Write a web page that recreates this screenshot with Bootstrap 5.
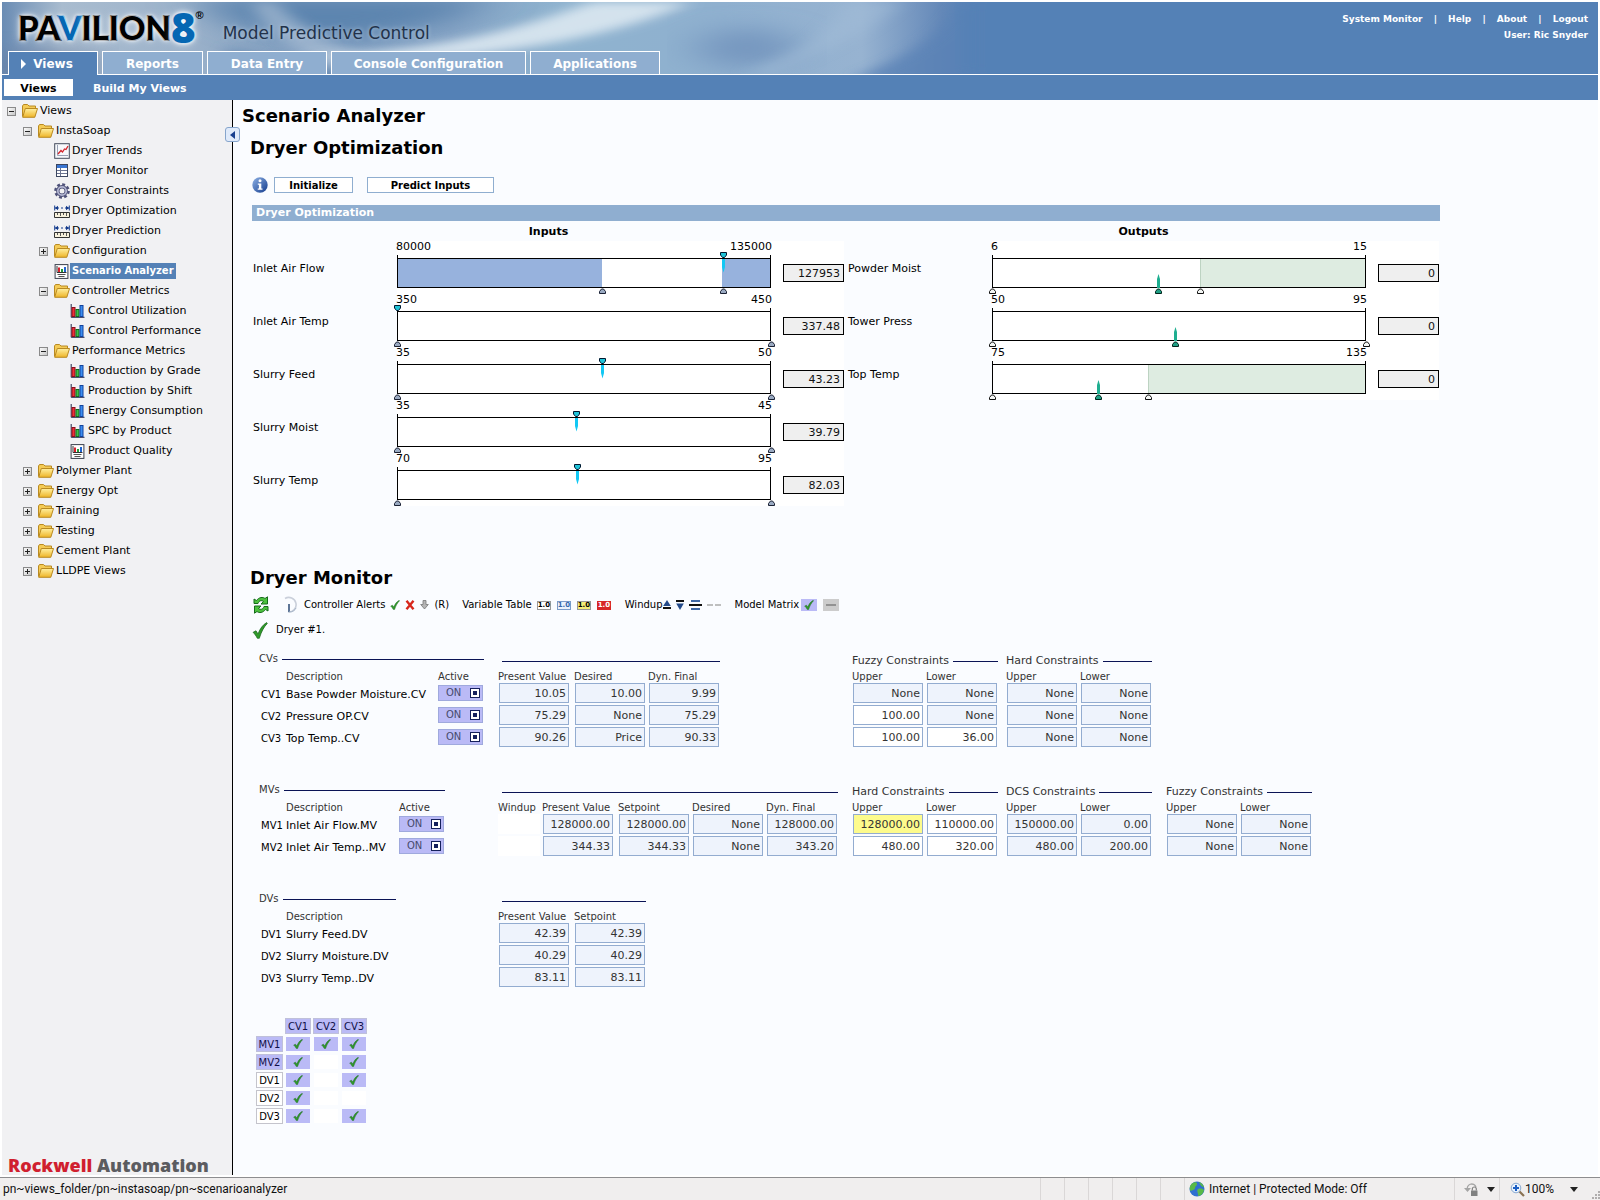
<!DOCTYPE html>
<html lang="en">
<head>
<meta charset="utf-8">
<meta name="viewport" content="width=device-width, initial-scale=1">
<title>Pavilion8 - Scenario Analyzer</title>
<link href="https://cdn.jsdelivr.net/npm/bootstrap@5.3.0/dist/css/bootstrap.min.css" rel="stylesheet">
<style>
  :root { --pv-blue:#5481b6; --pv-light:#8faed0; --pv-lilac:#babaf6; --pv-navy:#0a1355; }
  body { font-family:"DejaVu Sans",Verdana,sans-serif; font-size:11px; line-height:16px; color:#000; background:#fff; min-height:100vh; }
  a { color:inherit; text-decoration:none; }
  svg { flex:none; display:block; }
  h1, h2 { font-size:18px; line-height:24px; font-weight:700; margin:0; }

  /* banner */
  .banner { background:var(--pv-blue); height:73px; margin:2px 2px 0; position:relative; border-bottom:1px solid #fff; }
  .banner-art { position:absolute; left:0; top:0; width:1000px; height:72px; }
  .banner-body { position:relative; height:72px; }
  .brand-row { height:49px; padding-left:16px; }
  .brand-name { font:900 33px/40px Lato,"Open Sans",sans-serif; color:#000; -webkit-text-stroke:2px; paint-order:stroke fill; text-shadow:0 0 3px #fff,0 0 5px #fff,0 0 8px #dfe8f2; }
  .brand-hue { color:#0567b3; }
  .brand-eight { font:800 42px/40px "Open Sans",sans-serif; color:#0567b3; -webkit-text-stroke:1px; }
  .brand-reg { font:700 11px/12px "Liberation Sans",sans-serif; margin-bottom:24px; }
  .brand-sub { font-size:17px; line-height:24px; color:#22324a; margin-left:19px; padding-top:19px; text-shadow:0 0 4px #b5c8dc; }
  .tool-links { font-size:9px; font-weight:700; color:#fff; padding:9px 10px 0 0; }
  .tabs { gap:4px; padding-left:6px; height:24px; }
  .tabs a { border:1px solid #fff; border-bottom:0; background:var(--pv-light); color:#fff; font-weight:700; font-size:12px; line-height:24px; height:23px; text-align:center; }
  .tabs a.on { background:var(--pv-blue); height:24px; padding-right:12px; gap:7px; }
  .tab-a { width:90px; } .tab-b { width:101px; } .tab-c { width:120px; } .tab-d { width:195px; } .tab-e { width:130px; }
  .subbar { background:var(--pv-blue); height:25px; margin:0 2px; padding:4px 0 4px 2px; color:#fff; font-weight:700; gap:20px; }
  .subbar a { line-height:19px; height:17px; }
  .subbar a.on { background:#fff; color:#000; width:69px; text-align:center; }

  /* tree */
  .tree-pane { width:231px; margin-left:2px; background:#f1f1f3; border-right:1px solid #000; position:relative; }
  .tree ul, .tree { list-style:none; margin:0; padding:0; }
  .tree { padding:1px 0 0 5px; }
  .tree ul { padding-left:16px; }
  .node { display:flex; align-items:center; height:20px; }
  .twist { width:15px; flex:none; display:flex; padding:0; border:0; background:none; }
  .node .pic { width:18px; flex:none; }
  .node a { white-space:nowrap; }
  .node a.on { background:var(--pv-blue); color:#fff; font-weight:700; font-size:10px; padding:0 2px; margin-left:-2px; }
  .collapser { position:absolute; right:-8px; top:27px; width:15px; height:15px; padding:0; border:1px solid #86a5cc; border-radius:3px; background:#dfeafa; display:flex; align-items:center; justify-content:center; }
  .vendor { font:800 18px/20px "Open Sans",sans-serif; color:#5b5c60; padding-left:6px; margin-top:auto; white-space:nowrap; }
  .vendor b { color:#d01f2f; font-weight:800; }

  /* content */
  .pane { background:#fafcff; padding:4px 0 0 9px; margin-right:2px; min-width:0; }
  .inset { padding-left:8px; }
  .opt-title { margin-top:8px; }
  .optimizer { max-width:1198px; padding-left:10px; }
  .actions { margin:17px 0 12px; }
  .actions svg { margin-right:6px; }
  .wire-btn { border:1px solid var(--pv-light); background:#fff; font-size:10px; font-weight:700; line-height:13px; height:16px; padding:1px 0 0; }
  .w-init { width:79px; } .w-pred { width:127px; margin-left:14px; }
  .strip { background:var(--pv-light); color:#fff; font-weight:700; padding-left:4px; height:16px; }
  .halves { display:grid; grid-template-columns:1fr 1fr; gap:2px; }
  .half-title { font-weight:700; text-align:center; height:20px; line-height:22px; }
  .gauge-row { display:flex; height:53px; padding-right:1px; }
  .gauge-row > label { width:145px; flex:none; padding:20px 0 0 1px; }
  .gauge-side { flex:1; display:flex; background:#fff; gap:12px; }
  .gauge { flex:1; position:relative; }
  .scale { display:flex; justify-content:space-between; line-height:12px; height:14px; margin:0 -1px; }
  .gauge-box { border:solid #000; border-width:0 1px; height:33px; padding-top:3px; }
  .gauge-track { border:solid #000; border-width:1px 0; height:30px; position:relative; }
  .fill { position:absolute; top:0; bottom:0; background:#97b2dd; }
  .fill.good { background:#deece1; border-left:1px solid #bdd3c2; }
  .pin { position:absolute; margin-left:-5px; }
  .pin-top { top:11px; } .pin-low { top:33px; } .pin-limit { top:46px; }
  .readout { width:61px; height:18px; margin-top:23px; border:1px solid #000; background:#efefef; text-align:right; padding:0 3px; font-size:11px; line-height:16px; border-radius:0; color:#111; }

  /* monitor */
  .monitor { margin-top:60px; }
  .legend-bar { font-size:10px; height:22px; padding-left:2px; }
  .legend-bar + .legend-bar { margin:3px 0 12px; }
  .keys { display:flex; align-items:center; gap:5px; }
  .keys-alert { margin-right:13px; }
  .keys-wind { margin:0 14px; }
  .clock { margin:0 5px 0 11px; }
  .wind-set { display:flex; gap:5px; }
  .mat-set { display:flex; gap:6px; margin-left:2px; }
  .chip { border:1px solid #999; font-size:7px; line-height:7px; font-weight:700; width:14px; height:9px; text-align:center; background:#fff; margin-left:1px; }
  .chip.first-chip { margin-left:0; }
  .chip.c-blue { border-color:#7b9cc9; color:#3767ab; background:#eaf2fc; }
  .chip.c-yel { background:#f3ec76; }
  .chip.c-red { background:#d72626; color:#fff; border-color:#d72626; }
  .block { display:flex; padding-left:17px; margin-bottom:35px; color:#333; }
  .names { width:239px; flex:none; }
  .values { width:354px; flex:none; }
  .pair { width:154px; flex:none; }
  .pair + .pair { width:160px; }
  .grp { width:max-content; }
  .grp-title { display:flex; align-items:center; gap:4px; height:16px; margin-right:2px; white-space:nowrap; }
  .names .grp-title { height:12px; line-height:12px; margin:0 0 4px; font-size:10px; }
  .values .grp-title { margin-left:4px; }
  .grp-title::after { content:""; flex:1; border-top:1px solid var(--pv-navy); }
  .grp table { border-collapse:collapse; table-layout:fixed; }
  .grp th { font-weight:400; font-size:10px; line-height:12px; height:14px; padding:2px 0 0; white-space:nowrap; }
  .grp td { padding:0; height:22px; vertical-align:top; }
  .names td { color:#000; white-space:nowrap; }
  .names td.txt { line-height:20px; padding-top:2px; }
  .c-id { width:27px; } .c-cv { width:152px; } .c-mv { width:113px; } .c-dv { width:110px; } .c-on { width:46px; }
  .c-wide { width:76px; } .c-val { width:74px; } .c-wind { width:44px; }
  .names td.code { font-size:10px; padding-left:2px; }
  .datum { display:block; width:70px; height:20px; margin-left:1px; border:1px solid #93acd0; border-radius:0; background:#eef3fc; font-size:11px; line-height:18px; padding:0 2px; text-align:right; color:#333; }
  .datum.open { background:#fff; } .datum.flag { background:#fdfb8c; }
  .blank { display:block; width:42px; height:20px; background:#fff; }
  .switch { display:flex; align-items:center; justify-content:space-between; width:45px; height:16px; margin-top:2px; padding:0 2px 0 7px; border:1px solid #9fa9dd; background:var(--pv-lilac); color:#474a6c; font-size:10px; line-height:14px; }
  .matrix { border-collapse:separate; border-spacing:2px; margin:-8px 0 0 12px; }
  .matrix th { font-size:10px; font-weight:400; line-height:13px; height:16px; padding:1px 0 0; width:26px; text-align:center; border:1px solid #c4c4cc; background:#fff; color:#000; }
  .matrix thead th, .matrix th.live { background:var(--pv-lilac); border-color:#bfc0da; color:#101048; }
  .matrix thead td { background:none; }
  .matrix tbody th { width:27px; }
  .matrix td { padding:0; height:16px; background:#fff; border:1px solid #fafcff; }
  .matrix td.hit { background:var(--pv-lilac); }
  .matrix td svg { margin:auto; }

  /* status bar */
  .status { border-top:1px solid #8d8d8f; margin-top:2px; background:#f0eeee; height:23px; font:12px/22px Roboto,"Open Sans",sans-serif; color:#111; padding-left:3px; }
  .slot { border-left:1px solid #dad7d7; width:24px; align-self:stretch; }
  .slot-zone { width:270px; } .slot-lock { width:45px; } .slot-zoom { width:101px; padding-left:10px; }
</style>
<script src="https://cdn.jsdelivr.net/npm/bootstrap@5.3.0/dist/js/bootstrap.bundle.min.js"></script>
</head>
<body class="d-flex flex-column">

<svg width="0" height="0" class="position-absolute" aria-hidden="true">
  <defs>
    <linearGradient id="gFold" x1="0" y1="0" x2="0" y2="1"><stop offset="0" stop-color="#fff0a0"/><stop offset="1" stop-color="#eeb427"/></linearGradient>
    <linearGradient id="gInfo" x1="0" y1="0" x2="1" y2="1"><stop offset="0" stop-color="#8fb2e6"/><stop offset="1" stop-color="#123b8c"/></linearGradient>
    <linearGradient id="gTog" x1="0" y1="0" x2="1" y2="1"><stop offset="0" stop-color="#fff"/><stop offset="1" stop-color="#c4c4c4"/></linearGradient>
    <symbol id="folder" viewBox="0 0 16 14"><path d="M.5 12.500V2l1-1.500h4L7 2h6.500v2" fill="#f4cb55" stroke="#b98a22"/><path d="M.7 13.300 3.300 4.500h12.200l-2.700 8.800z" fill="url(#gFold)" stroke="#b98a22"/></symbol>
    <symbol id="minus" viewBox="0 0 9 9"><rect x=".5" y=".5" width="8" height="8" fill="url(#gTog)" stroke="#8a8a8a"/><path d="M2 4.500h5" stroke="#222"/></symbol>
    <symbol id="plus" viewBox="0 0 9 9"><rect x=".5" y=".5" width="8" height="8" fill="url(#gTog)" stroke="#8a8a8a"/><path d="M2 4.500h5M4.500 2v5" stroke="#222"/></symbol>
    <symbol id="trend" viewBox="0 0 16 16"><rect x=".7" y=".7" width="14.600" height="14.600" fill="#f7f9fc" stroke="#444b5c"/><path d="M3.500 2v10.500H14" fill="none" stroke="#9aa2b5"/><path d="m4 11 3-3.500 1.500 1.500L10.500 6 12 6.500 14 3" fill="none" stroke="#d3262d" stroke-width="1.300"/></symbol>
    <symbol id="grid" viewBox="0 0 16 16"><rect x="2.500" y="1.500" width="11" height="12" fill="#fff" stroke="#3c4660"/><path d="M3 2h10v3H3z" fill="#3a76d2"/><path d="M3 7.500h10M3 10.500h10M6.500 5v8" stroke="#6a7390"/></symbol>
    <symbol id="gear" viewBox="0 0 16 16"><circle cx="8" cy="8" r="6.600" fill="none" stroke="#4d5078" stroke-width="2.400" stroke-dasharray="2.900 2.280"/><circle cx="8" cy="8" r="4.200" fill="none" stroke="#4d5078" stroke-width="3.400"/><circle cx="8" cy="8" r="4.200" fill="none" stroke="#b4b7d2" stroke-width="1.800"/><circle cx="8" cy="8" r="2" fill="#f1f1f3"/></symbol>
    <symbol id="ruler" viewBox="0 0 16 13"><path d="M.7.500v5M15.300.500v5" stroke="#123a8c"/><path d="M1 3h4M11 3h4M7 3h2" stroke="#123a8c"/><path d="m1 3 3-2.300v4.600zM15 3l-3-2.300v4.600z" fill="#123a8c"/><path d="M.5 7.500h15v5H.5z" fill="#f7f1dc" stroke="#333"/><path d="M3.500 10v-2M6.500 11V8M9.500 10v-2M12.500 11V8" stroke="#555"/></symbol>
    <symbol id="bars" viewBox="0 0 14 14"><path d="M.7 0v13.300H14" fill="none" stroke="#23294d"/><rect x="1.500" y="3.500" width="3" height="9" fill="#ee2f3a" stroke="#8b0f1c"/><rect x="5.500" y="5.500" width="3" height="7" fill="#3cc14a" stroke="#0f6a1c"/><rect x="9.500" y="1.500" width="3" height="11" fill="#3c8df0" stroke="#11419b"/></symbol>
    <symbol id="report" viewBox="0 0 14 15"><rect x=".6" y=".6" width="12.800" height="13.800" fill="#fff" stroke="#3a3f4c"/><path d="M2.500 2v6.500H12" fill="none" stroke="#333"/><path d="M3.500 3.500h2V8h-2z" fill="#d8202c"/><path d="M6.500 5h2v3h-2z" fill="#1f9a35"/><path d="M9.500 3h2v5h-2z" fill="#1f64d0"/><path d="M3 10.500h8M4 12.500h6" stroke="#555"/></symbol>
    <symbol id="tick" viewBox="0 0 12 12"><path d="M.8 7.300 3 6.200l1.500 2.200C6.200 4.500 8 2 11 .4L11.500 1C8.800 3.500 7 7 5.500 11.500H4C3 9.700 2 8.400.8 7.300z" fill="#2f9a2a" stroke="#155f18" stroke-width=".5"/></symbol>
    <symbol id="pinValue" viewBox="0 0 10 21"><path d="M2.500.500h6v2.500L6.500 5.500h-2L2.500 3z" fill="#20c4d8" stroke="#001830"/><path d="M4 7h3v8L5.500 20.500 4 15z" fill="#12c8f4"/></symbol>
    <symbol id="pinHead" viewBox="0 0 10 7"><path d="M2.500.500h6v2.500L6.500 5.500h-2L2.500 3z" fill="#20c4d8" stroke="#001830"/></symbol>
    <symbol id="pinOut" viewBox="0 0 10 20"><path d="M5.500 0 7 5v9H4V5z" fill="#1fae90"/><path d="M2.500 19.500v-2l2-2.500h2l2 2.500v2z" fill="#1f9f84" stroke="#00241c"/></symbol>
    <symbol id="pinGrey" viewBox="0 0 10 7"><path d="M2.500 6.500v-2l2-2.500h2l2 2.500v2z" fill="#9aaac2" stroke="#1a2134"/></symbol>
    <symbol id="pinWhite" viewBox="0 0 10 7"><path d="M2.500 6.500v-2l2-2.500h2l2 2.500v2z" fill="#f4f6f4" stroke="#111"/></symbol>
  </defs>
</svg>

<header class="banner">
  <svg class="banner-art" viewBox="0 0 1000 72" preserveAspectRatio="none" aria-hidden="true">
    <defs>
      <linearGradient id="bBase" x1="0" x2="1"><stop offset="0" stop-color="#6a8cb4"/><stop offset=".06" stop-color="#a9bccf"/><stop offset=".18" stop-color="#9db3cb"/><stop offset=".3" stop-color="#7f9dbf"/><stop offset=".45" stop-color="#86a4c5"/><stop offset=".56" stop-color="#8fb3cf"/><stop offset=".72" stop-color="#8fb0cf"/><stop offset=".86" stop-color="#97b3d1"/><stop offset=".94" stop-color="#6488b8"/><stop offset=".97" stop-color="#5481b6"/><stop offset="1" stop-color="#5481b6"/></linearGradient>
      <filter id="soft" x="-20%" y="-50%" width="140%" height="200%"><feGaussianBlur stdDeviation="9 5"/></filter>
      <filter id="softer" x="-30%" y="-80%" width="160%" height="260%"><feGaussianBlur stdDeviation="24 10"/></filter>
    </defs>
    <rect width="1000" height="72" fill="url(#bBase)"/>
    <path d="M190-5H490C460 18 400 34 320 36 260 34 220 20 190-5z" fill="#5b84af" filter="url(#softer)"/>
    <path d="M225 45C270 58 330 66 420 80H225z" fill="#5f83ad" filter="url(#soft)" opacity=".7"/>
    <path d="M250 0h24c20 25 70 50 130 72h-60C290 50 262 30 250 0z" fill="#b2c4d8" filter="url(#soft)" opacity=".6"/>
    <path d="M0 50h90v30H0z" fill="#64779b" filter="url(#softer)" opacity=".7"/>
    <path d="M300 54C430 50 510 30 590 0H690C620 32 520 50 400 60z" fill="#dce8f1" filter="url(#soft)" opacity=".9"/>
    <ellipse cx="745" cy="46" rx="50" ry="20" fill="#7697bf" filter="url(#softer)"/>
    <path d="M770 72C820 50 870 30 900 0L840 0C830 30 800 50 740 72z" fill="#a3bdd8" filter="url(#soft)" opacity=".5"/>
    <path d="M850 76C900 58 940 34 960 0h60v90z" fill="#5a82b6" filter="url(#soft)" opacity=".8"/>
    <path d="M960 0h40v72h-40z" fill="#5481b6" filter="url(#soft)"/>
    <path d="M985 0h15v72h-15z" fill="#5481b6"/>
  </svg>
  <div class="banner-body">
    <div class="d-flex brand-row">
      <div class="d-flex align-items-center">
        <span class="brand-name">PA<span class="brand-hue">V</span>ILION</span><span class="brand-name brand-eight">8</span><span class="brand-reg">®</span>
      </div>
      <div class="brand-sub">Model Predictive Control</div>
      <div class="tool-links ms-auto text-end">
        <div><a href="#">System Monitor</a> <span class="px-2">|</span> <a href="#">Help</a> <span class="px-2">|</span> <a href="#">About</a> <span class="px-2">|</span> <a href="#">Logout</a></div>
        <div>User: Ric Snyder</div>
      </div>
    </div>
    <nav class="d-flex tabs" aria-label="Main">
      <a href="#" class="on tab-a d-flex align-items-center justify-content-center"><svg width="5" height="10" viewBox="0 0 5 10"><path d="M0 0l5 5-5 5z" fill="#fff"/></svg>Views</a>
      <a href="#" class="tab-b">Reports</a>
      <a href="#" class="tab-c">Data Entry</a>
      <a href="#" class="tab-d">Console Configuration</a>
      <a href="#" class="tab-e">Applications</a>
    </nav>
  </div>
</header>
<nav class="subbar d-flex" aria-label="Views"><a href="#" class="on">Views</a><a href="#">Build My Views</a></nav>

<div class="d-flex flex-fill">
  <aside class="tree-pane d-flex flex-column flex-shrink-0">
    <button class="collapser" aria-label="Hide tree"><svg width="5" height="8" viewBox="0 0 5 8"><path d="M5 0v8L0 4z" fill="#173f8f"/></svg></button>
    <ul class="tree" id="tree"></ul>
    <div class="vendor"><b>Rockwell</b> Automation</div>
  </aside>

  <main class="pane flex-fill">
    <h1>Scenario Analyzer</h1>
    <section>
      <h2 class="inset opt-title">Dryer Optimization</h2>
      <div class="optimizer">
        <div class="d-flex align-items-center actions">
          <svg width="16" height="16" viewBox="0 0 16 16"><circle cx="8" cy="8" r="7.700" fill="url(#gInfo)"/><circle cx="8" cy="3.800" r="1.500" fill="#fff"/><path d="M5.800 6.500h3.500v5h1.200v1.200H5.700v-1.200h1.200V7.700H5.800z" fill="#fff"/></svg>
          <button class="wire-btn w-init">Initialize</button>
          <button class="wire-btn w-pred">Predict Inputs</button>
        </div>
        <div class="strip">Dryer Optimization</div>
        <div class="halves">
          <div id="inputs"><div class="half-title">Inputs</div></div>
          <div id="outputs"><div class="half-title">Outputs</div></div>
        </div>
      </div>
    </section>

    <section class="monitor">
      <h2 class="inset">Dryer Monitor</h2>
      <div class="inset mt-1">
        <div class="legend-bar d-flex align-items-center">
          <svg width="18" height="18" viewBox="0 0 18 18"><path d="M2 7.500V3l2.500 1.500C7 1 11 .8 13 2.500L15.500.800V8H9l2.500-2.500C9.500 4 7 4.500 6 7.500z" fill="#4cc13e" stroke="#156b1a"/><path d="M16 10.500V15l-2.500-1.500C11 17 7 17.200 5 15.500L2.500 17.200V10H9l-2.500 2.500c2 1.500 4.500 1 5.500-2z" fill="#4cc13e" stroke="#156b1a"/></svg>
          <svg width="18" height="18" viewBox="0 0 18 18" class="clock"><path d="M4 2.500a7.300 7.300 0 1 1 3 13.500" fill="none" stroke="#c9cfda" stroke-width="1.600"/><path d="M8 8v8" stroke="#5d7596" stroke-width="2"/><path d="M8 16c4 0 6-2 7-4" fill="none" stroke="#a5b4c8"/></svg>
          <div class="keys keys-alert">
            <span>Controller Alerts</span>
            <svg width="10" height="10"><use href="#tick"/></svg>
            <svg width="10" height="10" viewBox="0 0 10 10"><path d="M1.500.8 8.500 9.200M8.500.8 1.500 9.200" stroke="#d7261b" stroke-width="2.400"/></svg>
            <svg width="9" height="10" viewBox="0 0 9 10"><path d="M3 .5h3v4h2.300L4.500 9 .7 4.500H3z" fill="#b5b5b5" stroke="#777" stroke-width=".8"/></svg>
            <span>(R)</span>
          </div>
          <div class="keys">
            <span>Variable Table</span>
            <span class="chip first-chip">1.0</span><span class="chip c-blue">1.0</span><span class="chip c-yel">1.0</span><span class="chip c-red">1.0</span>
          </div>
          <div class="d-flex align-items-center keys-wind">
            <span>Windup</span>
            <span class="wind-set">
              <svg width="8" height="10" viewBox="0 0 8 10"><path d="M4 0l3.800 6H.2z" fill="#234a8a"/><path d="M0 8h8" stroke="#111" stroke-width="2"/></svg>
              <svg width="8" height="10" viewBox="0 0 8 10"><path d="M0 1h8" stroke="#111" stroke-width="2"/><path d="M4 10l3.800-6.500H.2z" fill="#234a8a"/></svg>
              <svg width="13" height="10" viewBox="0 0 13 10"><path d="M2 1h9M2 9h9" stroke="#4069a6" stroke-width="2"/><path d="M0 5h13" stroke="#111" stroke-width="2"/></svg>
              <svg width="14" height="10" viewBox="0 0 14 10"><path d="M0 5h6M8 5h6" stroke="#aaa" stroke-width="1.500"/></svg>
            </span>
          </div>
          <span>Model Matrix</span>
          <span class="mat-set">
            <svg width="16" height="12" viewBox="0 0 16 12"><path d="M0 0h16v12H0z" fill="#babaf6"/><use href="#tick" x="3" y="1" width="10" height="10"/></svg>
            <svg width="16" height="12" viewBox="0 0 16 12"><path d="M0 0h16v12H0z" fill="#ccc"/><path d="M3 6h10" stroke="#929292" stroke-width="2"/></svg>
          </span>
        </div>
        <div class="legend-bar d-flex align-items-center">
          <svg width="16" height="17" viewBox="0 0 12 12" preserveAspectRatio="none" class="me-2"><use href="#tick"/></svg>Dryer #1.
        </div>
      </div>
      <div id="blocks"></div>
      <table class="matrix" id="matrix"></table>
    </section>
  </main>
</div>

<footer class="status d-flex align-items-center">
  <span class="me-auto">pn~views_folder/pn~instasoap/pn~scenarioanalyzer</span>
  <span class="slot"></span><span class="slot"></span><span class="slot"></span><span class="slot"></span><span class="slot"></span><span class="slot"></span>
  <span class="slot slot-zone d-flex align-items-center ps-1">
    <svg width="16" height="16" viewBox="0 0 16 16" class="me-1"><circle cx="8" cy="8" r="7.500" fill="#2f6fd0"/><path d="M3 2.500c3-2 5-1.500 5 .5s-2 2-2 4-3 2-4.500 3C0 7 1 4 3 2.500zM9 8c3-1 5 0 6 1-.5 3-3 6-6 6 1-2-2-5 0-7zM10 1c3 1 5 4 5 5-2 0-4-2-5-5z" fill="#58b947"/></svg>
    Internet | Protected Mode: Off
  </span>
  <span class="slot slot-lock d-flex align-items-center ps-2">
    <svg width="16" height="16" viewBox="0 0 16 16" class="me-2"><path d="M4.500 9a4.500 4.500 0 1 1 8.500-3" fill="none" stroke="#a5a5a5" stroke-width="1.300"/><path d="M1 7h7L4.500 11z" fill="#a5a5a5"/><path d="M8 9.500h6.500V15H8z" fill="#808080"/><path d="M9.300 9.500V8a2 2 0 0 1 4 0v1.500" fill="none" stroke="#808080" stroke-width="1.200"/></svg>
    <svg width="8" height="5" viewBox="0 0 8 5"><path d="M0 0h8L4 5z" fill="#222"/></svg>
  </span>
  <span class="slot slot-zoom d-flex align-items-center">
    <svg width="15" height="15" viewBox="0 0 15 15"><path d="m9 9 5 5" stroke="#8a7252" stroke-width="2.200"/><circle cx="6" cy="6" r="4.800" fill="#e8f2fd" stroke="#8aa9cf"/><path d="M6 3v6M3 6h6" stroke="#1c5fc4" stroke-width="2"/></svg>
    <span class="me-3">100%</span>
    <svg width="8" height="5" viewBox="0 0 8 5"><path d="M0 0h8L4 5z" fill="#222"/></svg>
    <svg width="10" height="10" viewBox="0 0 10 10" class="ms-auto align-self-end"><path d="M8 2h2M8 5h2M8 8h2M5 5h2M5 8h2M2 8h2" stroke="#b0adad" stroke-width="2"/></svg>
  </span>
</footer>

<script>
// navigation tree: [label, icon, children | "closed"]
const tree = [["Views","folder",[
  ["InstaSoap","folder",[
    ["Dryer Trends","trend"],["Dryer Monitor","grid"],["Dryer Constraints","gear"],
    ["Dryer Optimization","ruler"],["Dryer Prediction","ruler"],
    ["Configuration","folder","closed"],["Scenario Analyzer","report"],
    ["Controller Metrics","folder",[["Control Utilization","bars"],["Control Performance","bars"]]],
    ["Performance Metrics","folder",[["Production by Grade","bars"],["Production by Shift","bars"],["Energy Consumption","bars"],["SPC by Product","bars"],["Product Quality","report"]]]
  ]],
  ["Polymer Plant","folder","closed"],["Energy Opt","folder","closed"],["Training","folder","closed"],
  ["Testing","folder","closed"],["Cement Plant","folder","closed"],["LLDPE Views","folder","closed"]
]]];
const iconSize = {folder:[16,14],trend:[16,16],grid:[16,16],gear:[16,16],ruler:[16,13],bars:[15,14],report:[15,15]};
const branch = list => list.map(([text, icon, kids]) => {
  const [w, h] = iconSize[icon];
  const twist = kids ? `<button class="twist" aria-label="Toggle ${text}"><svg width="9" height="9"><use href="#${kids === "closed" ? "plus" : "minus"}"/></svg></button>` : `<span class="twist"></span>`;
  return `<li><div class="node">${twist}<span class="pic"><svg width="${w}" height="${h}"><use href="#${icon}"/></svg></span><a href="#"${text === "Scenario Analyzer" ? ' class="on"' : ""}>${text}</a></div>${Array.isArray(kids) ? `<ul>${branch(kids)}</ul>` : ""}</li>`;
}).join("");
document.getElementById("tree").innerHTML = branch(tree);

// gauges: label, scale ends, reading, marker %, limit marks %, shaded ranges %
const inputs = [
  ["Inlet Air Flow",80000,135000,"127953",87.1,[54.8,87.1],[[0,54.8],[87.1,100]]],
  ["Inlet Air Temp",350,450,"337.48",0,[0,100],[]],
  ["Slurry Feed",35,50,"43.23",54.9,[0,100],[]],
  ["Slurry Moist",35,45,"39.79",47.9,[0,100],[]],
  ["Slurry Temp",70,95,"82.03",48.2,[0,100],[]]
];
const outputs = [
  ["Powder Moist",6,15,"0",44.4,[0,55.6],[[55.6,100]]],
  ["Tower Press",50,95,"0",49,[0,100],[]],
  ["Top Temp",75,135,"0",28.4,[0,41.8],[[41.8,100]]]
];
const gauge = (out) => ([name, lo, hi, val, mark, limits, fills]) => {
  const id = name.replace(/ /g, "-").toLowerCase();
  const pins = limits.map(p => `<svg class="pin pin-limit" width="10" height="7" style="left:${p}%"><use href="#${out ? "pinWhite" : "pinGrey"}"/></svg>`).join("");
  const marker = out ? `<svg class="pin pin-low" width="10" height="20" style="left:${mark}%"><use href="#pinOut"/></svg>`
    : mark ? `<svg class="pin pin-top" width="10" height="21" style="left:${mark}%"><use href="#pinValue"/></svg>`
    : `<svg class="pin pin-top" width="10" height="7" style="left:0%"><use href="#pinHead"/></svg>`;
  return `<div class="gauge-row"><label for="${id}">${name}</label><div class="gauge-side"><div class="gauge">
    <div class="scale"><span>${lo}</span><span>${hi}</span></div>
    <div class="gauge-box"><div class="gauge-track">${fills.map(([a, b]) => `<div class="fill${out ? " good" : ""}" style="left:${a}%;width:${b - a}%"></div>`).join("")}</div></div>
    ${pins}${marker}</div><input class="readout" id="${id}" value="${val}" readonly></div></div>`;
};
document.getElementById("inputs").insertAdjacentHTML("beforeend", inputs.map(gauge(false)).join(""));
document.getElementById("outputs").insertAdjacentHTML("beforeend", outputs.map(gauge(true)).join(""));

// controller blocks; a leading "*" marks an editable value, "!" a highlighted one
const blocks = [
  {title:"CVs", size:"c-cv", active:true, rows:["CV1|Base Powder Moisture.CV","CV2|Pressure OP.CV","CV3|Top Temp..CV"], groups:[
    ["values","",["Present Value","Desired","Dyn. Final"],[["10.05","10.00","9.99"],["75.29","None","75.29"],["90.26","Price","90.33"]]],
    ["pair","Fuzzy Constraints",["Upper","Lower"],[["None","None"],["*100.00","None"],["*100.00","*36.00"]]],
    ["pair","Hard Constraints",["Upper","Lower"],[["None","None"],["None","None"],["None","None"]]]]},
  {title:"MVs", size:"c-mv", active:true, rows:["MV1|Inlet Air Flow.MV","MV2|Inlet Air Temp..MV"], groups:[
    ["values","",["Windup","Present Value","Setpoint","Desired","Dyn. Final"],[["","128000.00","128000.00","None","128000.00"],["","344.33","344.33","None","343.20"]]],
    ["pair","Hard Constraints",["Upper","Lower"],[["!128000.00","*110000.00"],["*480.00","*320.00"]]],
    ["pair","DCS Constraints",["Upper","Lower"],[["150000.00","0.00"],["480.00","200.00"]]],
    ["pair","Fuzzy Constraints",["Upper","Lower"],[["None","None"],["None","None"]]]]},
  {title:"DVs", size:"c-dv", active:false, rows:["DV1|Slurry Feed.DV","DV2|Slurry Moisture.DV","DV3|Slurry Temp..DV"], groups:[
    ["values","",["Present Value","Setpoint"],[["42.39","42.39"],["40.29","40.29"],["83.11","83.11"]]]]}
];
const cell = (v, label) => {
  if (v === "") return `<td><span class="blank"></span></td>`;
  const kind = v[0] === "*" ? " open" : v[0] === "!" ? " flag" : "";
  return `<td><input class="datum${kind}" value="${v.replace(/^[*!]/, "")}" aria-label="${label}"${kind ? "" : " readonly"}></td>`;
};
const widths = {"Present Value":"c-wide", "Windup":"c-wind"};
document.getElementById("blocks").innerHTML = blocks.map(b => `<div class="block">
  <div class="names"><div class="grp"><div class="grp-title">${b.title}</div><table>
    <thead><tr><th class="c-id"></th><th class="${b.size}">Description</th>${b.active ? '<th class="c-on">Active</th>' : ""}</tr></thead>
    <tbody>${b.rows.map(r => { const [c, n] = r.split("|"); return `<tr><td class="txt code">${c}</td><td class="txt">${n}</td>${b.active ? `<td><button class="switch" aria-label="${c} active">ON<svg width="10" height="10" viewBox="0 0 10 10"><rect x=".5" y=".5" width="9" height="9" fill="#fff" stroke="#15205c"/><path d="M3 3h4v4H3z" fill="#15205c"/></svg></button></td>` : ""}</tr>`; }).join("")}</tbody></table></div></div>
  ${b.groups.map(([kind, title, heads, rows]) => `<div class="${kind}"><div class="grp"><div class="grp-title">${title}</div><table>
    <thead><tr>${heads.map(h => `<th class="${widths[h] || "c-val"}">${h}</th>`).join("")}</tr></thead>
    <tbody>${rows.map((r, i) => `<tr>${r.map((v, j) => cell(v, b.rows[i].split("|")[0] + " " + title + " " + heads[j])).join("")}</tr>`).join("")}</tbody></table></div></div>`).join("")}
</div>`).join("");

// model matrix
const hits = {MV1:[1,1,1], MV2:[1,0,1], DV1:[1,0,1], DV2:[1,0,0], DV3:[1,0,1]};
document.getElementById("matrix").innerHTML = `<thead><tr><td></td><th>CV1</th><th>CV2</th><th>CV3</th></tr></thead><tbody>` +
  Object.entries(hits).map(([k, v]) => `<tr><th class="${k[0] === "M" ? "live" : ""}">${k}</th>${v.map(x => x ? '<td class="hit"><svg width="10" height="10"><use href="#tick"/></svg></td>' : "<td></td>").join("")}</tr>`).join("") + "</tbody>";
</script>
</body>
</html>
